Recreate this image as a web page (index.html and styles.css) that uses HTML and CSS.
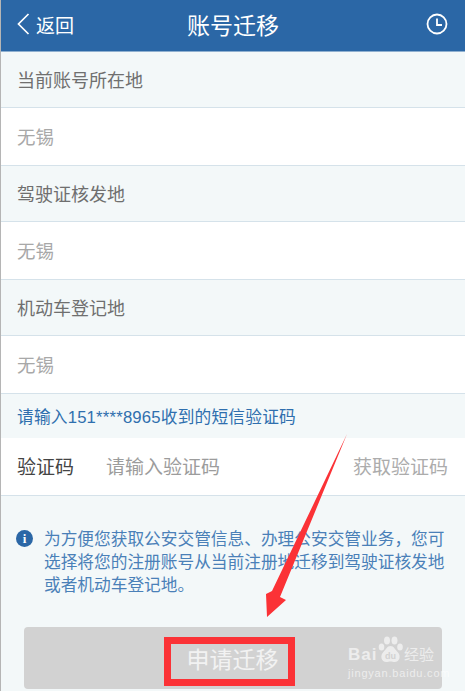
FILE: index.html
```html
<!DOCTYPE html>
<html>
<head>
  <meta charset="UTF-8">
  <title>账号迁移</title>
  <link rel="stylesheet" href="styles.css">
</head>
<body>
  <div class="page">
    <!-- Top bar -->
    <div class="topbar">
      <a class="back">
        <svg width="14" height="22" viewBox="0 0 14 22"><path d="M12.500 1 L2.500 11 L12.500 21" fill="none" stroke="#fff" stroke-width="1.700"/></svg>
        <span>返回</span>
      </a>
      <div class="title">账号迁移</div>
      <svg class="clock" width="22" height="22" viewBox="0 0 22 22"><circle cx="11" cy="11" r="9.500" fill="none" stroke="#fff" stroke-width="1.800"/><path d="M11 5.500 V12 H16" fill="none" stroke="#fff" stroke-width="1.800"/></svg>
    </div>

    <div class="row label">当前账号所在地</div>
    <div class="row value">无锡</div>
    <div class="row label">驾驶证核发地</div>
    <div class="row value">无锡</div>
    <div class="row label">机动车登记地</div>
    <div class="row value">无锡</div>

    <div class="hint">请输入151****8965收到的短信验证码</div>
    <div class="code-row">
      <span class="code-label">验证码</span>
      <span class="code-input">请输入验证码</span>
      <span class="code-get">获取验证码</span>
    </div>

    <div class="notice">
      <span class="info-icon">i</span>
      <p>为方便您获取公安交管信息、办理公安交管业务，您可选择将您的注册账号从当前注册地迁移到驾驶证核发地或者机动车登记地。</p>
    </div>

    <div class="submit">
      <span class="submit-text">申请迁移</span>
      <div class="watermark">
        <div class="wm-logo">
          <span class="wm-bai">Bai</span>
          <svg width="27" height="27" viewBox="0 0 27 27">
            <g fill="#fff">
              <ellipse cx="4.500" cy="11" rx="2.800" ry="3.500"/>
              <ellipse cx="10" cy="4.500" rx="3" ry="4"/>
              <ellipse cx="17.500" cy="4.500" rx="3" ry="4"/>
              <ellipse cx="23" cy="11" rx="2.800" ry="3.500"/>
              <path d="M13.500 10 C10 10 9 13.500 6 16.500 C3 19.500 4 26 9.500 26 C11 26 12 25.500 13.500 25.500 C15 25.500 16 26 17.500 26 C23 26 24 19.500 21 16.500 C18 13.500 17 10 13.500 10 Z"/>
            </g>
            <text class="wm-du" x="13.500" y="23" text-anchor="middle">du</text>
          </svg>
          <span class="wm-cn">经验</span>
        </div>
        <div class="wm-url">jingyan.baidu.com</div>
      </div>
    </div>

    <!-- Red markup drawn over the screenshot -->
    <div class="mark-box"></div>
    <svg class="mark-arrow" width="100" height="190" viewBox="0 0 100 190"><path d="M93 0 L26 163 L32 166 L13 183 L12 160 L18 157 Z" fill="#fb3236"/></svg>
  </div>
</body>
</html>
```

FILE: styles.css
```css
* {
  box-sizing: border-box;
}
html, body {
  margin: 0;
  padding: 0;
}
body {
  font-family: "Liberation Sans", "Noto Sans CJK SC", sans-serif;
  background-color: #f3f8f9;
}
.page {
  position: relative;
  width: 465px;
  height: 691px;
  overflow: hidden;
  border-left: 1px solid #b5b5b5;
}
.topbar {
  display: grid;
  grid-template-columns: 1fr auto 1fr;
  align-items: center;
  height: 52px;
  padding: 0 15px 3px 15px;
  background-color: #2b67a6;
  border-bottom: 1px solid #8fb0d0;
  color: #fff;
}
.back {
  display: flex;
  align-items: center;
  gap: 6px;
  font-size: 19px;
}
.title {
  font-size: 23px;
}
.clock {
  justify-self: end;
  margin-right: 2px;
}
.row {
  display: flex;
  align-items: center;
  padding-left: 16px;
  font-size: 18px;
  border-bottom: 1px solid #d5e2ea;
}
.label {
  height: 56px;
  padding-bottom: 2px;
  color: #6f6f6f;
  background-color: #f3f8f9;
}
.value {
  height: 58px;
  padding-bottom: 1px;
  font-size: 18.500px;
  color: #a8a8a8;
  background-color: #fff;
}
.hint {
  display: flex;
  align-items: center;
  height: 44px;
  padding-left: 16px;
  font-size: 16.700px;
  letter-spacing: 0.2px;
  color: #2f6fae;
  background-color: #f3f8f9;
}
.code-row {
  display: flex;
  align-items: center;
  height: 58px;
  padding: 0 17px 2px 16px;
  font-size: 19px;
  background-color: #fff;
  border-bottom: 1px solid #d5e2ea;
}
.code-label {
  width: 89px;
  color: #444;
}
.code-input {
  flex: 1;
  color: #9c9c9c;
}
.code-get {
  color: #acacac;
}
.notice {
  display: flex;
  padding: 34px 18px 0 15px;
  height: 131px;
}
.info-icon {
  flex: none;
  width: 17px;
  height: 17px;
  margin-right: 11px;
  border-radius: 50%;
  background-color: #2b67a6;
  color: #fff;
  font: bold 13px/17px "Liberation Serif", serif;
  text-align: center;
}
.notice p {
  margin: -2px 0 0;
  font-size: 16.700px;
  line-height: 23px;
  color: #4a80b8;
}
.submit {
  position: relative;
  display: flex;
  justify-content: center;
  align-items: center;
  height: 62px;
  margin: 0 23px;
  border-radius: 4px;
  background-color: #d2d2d2;
}
.submit-text {
  font-size: 23px;
  color: #f2f2f2;
  padding-right: 1px;
}
.watermark {
  position: absolute;
  right: 6px;
  top: 9px;
  width: 88px;
  color: #fff;
  opacity: 0.6;
  white-space: nowrap;
}
.wm-logo {
  display: flex;
  align-items: flex-end;
  height: 27px;
}
.wm-bai {
  width: 29px;
  font: bold 17px/17px "Liberation Sans", sans-serif;
  letter-spacing: 1px;
}
.wm-du {
  font: bold 9px "Liberation Sans", sans-serif;
  fill: #d2d2d2;
}
.wm-cn {
  font-size: 15px;
  line-height: 17px;
}
.wm-url {
  margin-top: 4px;
  font-size: 11px;
  line-height: 13px;
  letter-spacing: 0.8px;
}
.mark-box {
  position: absolute;
  left: 163px;
  top: 637px;
  width: 131px;
  height: 49px;
  border: 7px solid #fb3236;
}
.mark-arrow {
  position: absolute;
  left: 253px;
  top: 434px;
}
```
